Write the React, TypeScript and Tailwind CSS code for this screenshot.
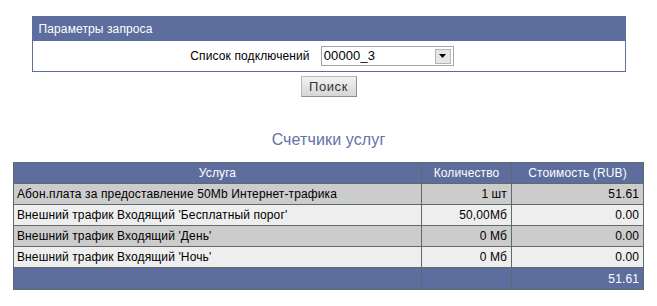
const rows = [
  { name: "Абон.плата за предоставление 50Mb Интернет-трафика", qty: "1 шт", cost: "51.61" },
  { name: "Внешний трафик Входящий 'Бесплатный порог'", qty: "50,00Мб", cost: "0.00" },
  { name: "Внешний трафик Входящий 'День'", qty: "0 Мб", cost: "0.00" },
  { name: "Внешний трафик Входящий 'Ночь'", qty: "0 Мб", cost: "0.00" },
];

export default function App() {
  return (
    <div className="w-[657px] h-[306px] bg-white text-[12px] tracking-[0.12px] text-black overflow-hidden" style={{ fontFamily: '"Liberation Sans", Arial, sans-serif' }}>
      <div className="w-[594px] mx-auto mt-[16px] border border-[#5d6d9e]">
        <div className="h-[24px] bg-[#5d6d9e] text-white pl-[6px] flex items-center">Параметры запроса</div>
        <div className="h-[30px] flex items-center justify-center gap-[11px] pr-[13px]">
          <span>Список подключений</span>
          <div className="w-[133px] h-[20px] border border-[#a5a5a5] flex items-center justify-between pl-[2px] pr-[2px]">
            <span className="text-[13px]">00000_3</span>
            <div className="w-[16px] h-[15px] bg-[#e6e6e6] border border-[#b5b5b5] flex items-center justify-center">
              <svg width="7" height="4" viewBox="0 0 7 4"><path d="M0 0h7L3.5 4z" fill="#000" /></svg>
            </div>
          </div>
        </div>
      </div>

      <div className="flex justify-center mt-[4px]">
        <button className="w-[56px] h-[21px] bg-gradient-to-b from-[#f2f2f2] to-[#d6d6d6] border border-[#b8b8b8] border-b-[#8f8f8f] border-r-[#8f8f8f] text-[13px] font-normal text-[#333333] tracking-[0.6px]">Поиск</button>
      </div>

      <div className="text-center text-[#6272a8] text-[16px] mt-[33px] leading-[20px]">Счетчики услуг</div>

      <table className="w-[631px] mx-auto mt-[12px] border-collapse border border-[#5f6b6b]">
        <thead>
          <tr className="h-[21px] bg-[#5d6d9e] text-white">
            <th className="font-normal border border-[#5f6b6b] text-center">Услуга</th>
            <th className="font-normal border border-[#5f6b6b] w-[90px] text-center">Количество</th>
            <th className="font-normal border border-[#5f6b6b] w-[132px] text-center">Стоимость (RUB)</th>
          </tr>
        </thead>
        <tbody>
          {rows.map((r, i) => (
            <tr key={i} className={"h-[21px] " + (i % 2 === 0 ? "bg-[#cccccc]" : "bg-[#eeeeee]")}>
              <td className="border border-[#5f6b6b] pl-[3px] p-0">{r.name}</td>
              <td className="border border-[#5f6b6b] text-right pr-[4px] p-0">{r.qty}</td>
              <td className="border border-[#5f6b6b] text-right pr-[4px] p-0">{r.cost}</td>
            </tr>
          ))}
          <tr className="h-[22px] bg-[#5d6d9e] text-white">
            <td className="border border-[#5f6b6b]"></td>
            <td className="border border-[#5f6b6b]"></td>
            <td className="border border-[#5f6b6b] text-right pr-[4px]">51.61</td>
          </tr>
        </tbody>
      </table>
    </div>
  );
}
